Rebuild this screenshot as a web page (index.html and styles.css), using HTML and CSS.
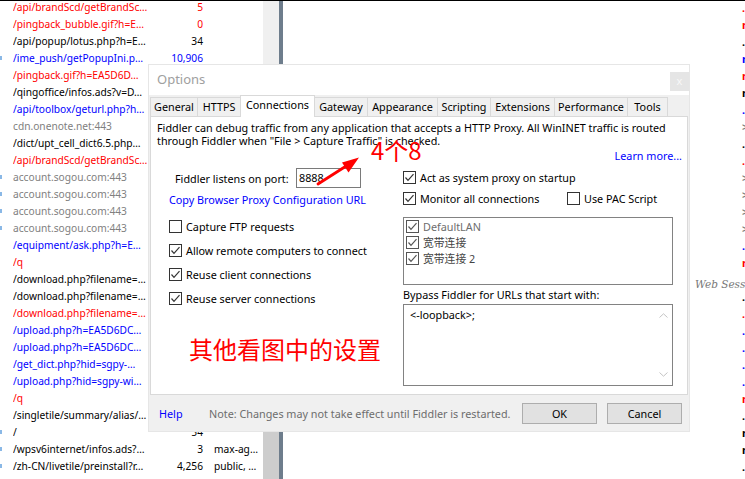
FILE: index.html
```html
<!DOCTYPE html>
<html>
<head>
<meta charset="utf-8">
<title>Options</title>
<link rel="stylesheet" href="styles.css">
</head>
<body>
<div class="screen">
  <div class="topline"></div>
  <div class="main">
    <div class="sessions">
      <div class="rows">
        <div class="row red"><span class="ic"></span><span class="url">/api/brandScd/getBrandSc…</span><span class="num">5</span><span class="cc"></span></div>
        <div class="row red"><span class="ic"></span><span class="url">/pingback_bubble.gif?h=E…</span><span class="num">0</span><span class="cc"></span></div>
        <div class="row blk"><span class="ic"></span><span class="url">/api/popup/lotus.php?h=E…</span><span class="num">34</span><span class="cc"></span></div>
        <div class="row blue"><span class="ic dot"></span><span class="url">/ime_push/getPopupIni.p…</span><span class="num">10,906</span><span class="cc"></span></div>
        <div class="row red"><span class="ic"></span><span class="url">/pingback.gif?h=EA5D6D…</span></div>
        <div class="row blk"><span class="ic"></span><span class="url">/qingoffice/infos.ads?v=D…</span></div>
        <div class="row blue"><span class="ic"></span><span class="url">/api/toolbox/geturl.php?h…</span></div>
        <div class="row gray"><span class="ic"></span><span class="url">cdn.onenote.net:443</span></div>
        <div class="row blk"><span class="ic"></span><span class="url">/dict/upt_cell_dict6.5.php…</span></div>
        <div class="row red"><span class="ic"></span><span class="url">/api/brandScd/getBrandSc…</span></div>
        <div class="row gray"><span class="ic dot"></span><span class="url">account.sogou.com:443</span></div>
        <div class="row gray"><span class="ic dot"></span><span class="url">account.sogou.com:443</span></div>
        <div class="row gray"><span class="ic dot"></span><span class="url">account.sogou.com:443</span></div>
        <div class="row gray"><span class="ic dot"></span><span class="url">account.sogou.com:443</span></div>
        <div class="row blue"><span class="ic"></span><span class="url">/equipment/ask.php?h=E…</span></div>
        <div class="row red"><span class="ic"></span><span class="url">/q</span></div>
        <div class="row blk"><span class="ic"></span><span class="url">/download.php?filename=…</span></div>
        <div class="row blk"><span class="ic"></span><span class="url">/download.php?filename=…</span></div>
        <div class="row red"><span class="ic"></span><span class="url">/download.php?filename=…</span></div>
        <div class="row blue"><span class="ic"></span><span class="url">/upload.php?h=EA5D6DC…</span></div>
        <div class="row blue"><span class="ic"></span><span class="url">/upload.php?h=EA5D6DC…</span></div>
        <div class="row blue"><span class="ic"></span><span class="url">/get_dict.php?hid=sgpy-…</span></div>
        <div class="row blue"><span class="ic"></span><span class="url">/upload.php?hid=sgpy-wi…</span></div>
        <div class="row red"><span class="ic"></span><span class="url">/q</span></div>
        <div class="row blk"><span class="ic"></span><span class="url">/singletile/summary/alias/…</span></div>
        <div class="row blk"><span class="ic dot"></span><span class="url">/</span><span class="num">54</span><span class="cc"></span></div>
        <div class="row blk"><span class="ic dot"></span><span class="url">/wpsv6internet/infos.ads?…</span><span class="num">3</span><span class="cc">max-ag…</span></div>
        <div class="row blk"><span class="ic dot"></span><span class="url">/zh-CN/livetile/preinstall?r…</span><span class="num">4,256</span><span class="cc">public, …</span></div>
        <div class="row blk"><span class="ic dot"></span><span class="url">/zh-CN/livetile/preinstall?r…</span><span class="num">4,256</span><span class="cc">public, …</span></div>
      </div>
    </div>
    <div class="vscroll"><div class="thumb"></div></div>
    <div class="splitter"></div>
    <div class="rpane">
      <div class="rows">
        <div class="mrow red">.</div>
        <div class="mrow red">n</div>
        <div class="mrow blk">.</div>
        <div class="mrow blue">n</div>
        <div class="mrow red">n</div>
        <div class="mrow blk">n</div>
        <div class="mrow blue">.</div>
        <div class="mrow gray">&gt;</div>
        <div class="mrow blk">.</div>
        <div class="mrow red">.</div>
        <div class="mrow gray">&gt;</div>
        <div class="mrow gray">&gt;</div>
        <div class="mrow gray">&gt;</div>
        <div class="mrow gray">&gt;</div>
        <div class="mrow blue">.</div>
        <div class="mrow red">n</div>
        <div class="mrow ws"><span class="wstext">Web Sessions</span></div>
        <div class="mrow blk">.</div>
        <div class="mrow red">.</div>
        <div class="mrow blue">.</div>
        <div class="mrow blue">.</div>
        <div class="mrow blue">.</div>
        <div class="mrow blue">.</div>
        <div class="mrow red">n</div>
        <div class="mrow blk">.</div>
        <div class="mrow blk">n</div>
        <div class="mrow blk">n</div>
        <div class="mrow blk">.</div>
      </div>
    </div>
  </div>

  <div class="dialog">
    <div class="titlebar">
      <span class="title">Options</span>
      <span class="close">x</span>
    </div>
    <div class="dbody">
      <div class="tabs">
        <div class="tab t-general">General</div>
        <div class="tab t-https">HTTPS</div>
        <div class="tab t-conn sel">Connections</div>
        <div class="tab t-gate">Gateway</div>
        <div class="tab t-app">Appearance</div>
        <div class="tab t-scr">Scripting</div>
        <div class="tab t-ext">Extensions</div>
        <div class="tab t-perf">Performance</div>
        <div class="tab t-tools">Tools</div>
      </div>
      <div class="panel">
        <div class="desc">Fiddler can debug traffic from any application that accepts a HTTP Proxy. All WinINET traffic is routed<br>through Fiddler when "File &gt; Capture Traffic" is checked.</div>
        <div class="learn"><span class="lnk">Learn more...</span></div>
        <div class="cols">
          <div class="lcol">
            <div class="portrow">
              <span class="plabel">Fiddler listens on port:</span>
              <span class="port">8888</span>
            </div>
            <div class="link">Copy Browser Proxy Configuration URL</div>
            <div class="checks">
              <div class="cb"><svg class="box" viewBox="0 0 13 13" width="13" height="13"><rect x="0.5" y="0.5" width="12" height="12" fill="#fff" stroke="#333"/></svg><span>Capture FTP requests</span></div>
              <div class="cb"><svg class="box" viewBox="0 0 13 13" width="13" height="13"><rect x="0.5" y="0.5" width="12" height="12" fill="#fff" stroke="#333"/><polyline points="2.5,6.5 5,9.3 10.5,3.2" fill="none" stroke="#333" stroke-width="1.2"/></svg><span>Allow remote computers to connect</span></div>
              <div class="cb"><svg class="box" viewBox="0 0 13 13" width="13" height="13"><rect x="0.5" y="0.5" width="12" height="12" fill="#fff" stroke="#333"/><polyline points="2.5,6.5 5,9.3 10.5,3.2" fill="none" stroke="#333" stroke-width="1.2"/></svg><span>Reuse client connections</span></div>
              <div class="cb"><svg class="box" viewBox="0 0 13 13" width="13" height="13"><rect x="0.5" y="0.5" width="12" height="12" fill="#fff" stroke="#333"/><polyline points="2.5,6.5 5,9.3 10.5,3.2" fill="none" stroke="#333" stroke-width="1.2"/></svg><span>Reuse server connections</span></div>
            </div>
            <div class="bigred">其他看图中的设置</div>
          </div>
          <div class="rcol">
            <div class="rrow first">
              <span class="cbi"><svg class="box" viewBox="0 0 13 13" width="13" height="13"><rect x="0.5" y="0.5" width="12" height="12" fill="#fff" stroke="#333"/><polyline points="2.5,6.5 5,9.3 10.5,3.2" fill="none" stroke="#333" stroke-width="1.2"/></svg><span>Act as system proxy on startup</span></span>
            </div>
            <div class="rrow second">
              <span class="cbi wide"><svg class="box" viewBox="0 0 13 13" width="13" height="13"><rect x="0.5" y="0.5" width="12" height="12" fill="#fff" stroke="#333"/><polyline points="2.5,6.5 5,9.3 10.5,3.2" fill="none" stroke="#333" stroke-width="1.2"/></svg><span>Monitor all connections</span></span>
              <span class="cbi"><svg class="box" viewBox="0 0 13 13" width="13" height="13"><rect x="0.5" y="0.5" width="12" height="12" fill="#fff" stroke="#333"/></svg><span>Use PAC Script</span></span>
            </div>
            <div class="listbox">
              <div class="li"><svg class="box" viewBox="0 0 13 13" width="13" height="13"><rect x="0.5" y="0.5" width="12" height="12" fill="#fff" stroke="#555"/><polyline points="2.5,6.5 5,9.3 10.5,3.2" fill="none" stroke="#555" stroke-width="1.2"/></svg><span class="li-gray">DefaultLAN</span></div>
              <div class="li"><svg class="box" viewBox="0 0 13 13" width="13" height="13"><rect x="0.5" y="0.5" width="12" height="12" fill="#fff" stroke="#555"/><polyline points="2.5,6.5 5,9.3 10.5,3.2" fill="none" stroke="#555" stroke-width="1.2"/></svg><span class="li-cjk">宽带连接</span></div>
              <div class="li"><svg class="box" viewBox="0 0 13 13" width="13" height="13"><rect x="0.5" y="0.5" width="12" height="12" fill="#fff" stroke="#555"/><polyline points="2.5,6.5 5,9.3 10.5,3.2" fill="none" stroke="#555" stroke-width="1.2"/></svg><span class="li-cjk">宽带连接 2</span></div>
            </div>
            <div class="bypass">Bypass Fiddler for URLs that start with:</div>
            <div class="ta">
              <div class="ta-text">&lt;-loopback&gt;;</div>
              <div class="ta-sb">
                <svg viewBox="0 0 9 5" width="9" height="5"><polyline points="0.5,4.5 4.5,0.8 8.5,4.5" fill="none" stroke="#c4c4c4" stroke-width="1"/></svg>
                <svg viewBox="0 0 9 5" width="9" height="5"><polyline points="0.5,0.5 4.5,4.2 8.5,0.5" fill="none" stroke="#c4c4c4" stroke-width="1"/></svg>
              </div>
            </div>
          </div>
        </div>
      </div>
      <div class="footer">
        <span class="help">Help</span>
        <span class="fnote">Note: Changes may not take effect until Fiddler is restarted.</span>
        <div class="btns">
          <div class="btn">OK</div>
          <div class="btn">Cancel</div>
        </div>
      </div>
    </div>
  </div>

  <div class="anno-num">4个8</div>
  <svg class="anno-arrow" viewBox="0 0 60 40" width="60" height="40">
    <line x1="8" y1="34" x2="37" y2="15.5" stroke="#ff0000" stroke-width="2.8" stroke-linecap="round"/>
    <polygon points="49,7.5 32,12.5 38.5,22.5" fill="#ff0000"/>
  </svg>
</div>
</body>
</html>
```

FILE: styles.css
```css
* { box-sizing: border-box; }
html, body { margin: 0; padding: 0; }
body {
  width: 745px;
  height: 479px;
  overflow: hidden;
  background: #fff;
  font-family: "Noto Sans", "Noto Sans CJK SC", sans-serif;
  font-size: 10.8px;
  color: #000;
}
.screen { position: relative; width: 745px; height: 479px; overflow: hidden; }
.topline { height: 1px; background: #000; }
.main { display: flex; height: 478px; }

.sessions { width: 263px; flex: none; overflow: hidden; font-size: 10.2px; }
.row { display: flex; align-items: flex-start; height: 17px; line-height: 12px; white-space: nowrap; }
.ic { width: 13px; height: 12px; flex: none; display: flex; align-items: center; }
.ic.dot::before { content: ""; width: 2px; height: 4px; background: #8ab8e6; }
.url { width: 142px; flex: none; overflow: hidden; padding-bottom: 4px; }
.num { width: 48px; flex: none; text-align: right; }
.cc { width: 49px; flex: none; margin-left: 11px; overflow: hidden; padding-bottom: 4px; color: #000; }
.red { color: #ff0000; }
.blue { color: #0000ff; }
.gray { color: #808080; }
.blk { color: #000; }

.vscroll { width: 16px; flex: none; background: #f0f0f0; display: flex; flex-direction: column; }
.thumb { margin-top: auto; height: 80px; background: #cdcdcd; }
.splitter { width: 4px; flex: none; background: #6e7d8c; }
.rpane { flex: 1; overflow: hidden; }
.mrow { height: 17px; line-height: 14px; padding-left: 459px; white-space: nowrap; overflow: hidden; font-weight: bold; }
.mrow.ws { padding-left: 412px; overflow: visible; font-weight: normal; }
.wstext { display: block; padding-top: 4px; line-height: 14px; font-family: "DejaVu Serif", serif; font-style: italic; font-size: 10.5px; color: #777; }

/* dialog */
.dialog {
  position: absolute;
  left: 148px;
  top: 64px;
  width: 542px;
  height: 368px;
  border: 1px solid #e6e6e6;
  background: #fff;
  display: flex;
  flex-direction: column;
}
.titlebar { height: 30px; flex: none; display: flex; justify-content: space-between; align-items: flex-start; padding-left: 8px; }
.title { margin-top: 6px; font-size: 13px; line-height: 16px; color: #a0a0a0; }
.close { margin-top: 7px; width: 19px; height: 19px; background: #e5e5e5; color: #f8f8f8; font-size: 11px; line-height: 17px; text-align: center; }
.dbody { flex: 1; background: #f0f0f0; padding: 0 1px; display: flex; flex-direction: column; }

.tabs { height: 21px; flex: none; display: flex; align-items: flex-end; }
.tab {
  height: 19px;
  margin-left: -1px;
  border: 1px solid #d9d9d9;
  border-bottom: 0;
  background: #f0f0f0;
  text-align: center;
  line-height: 17px;
  white-space: nowrap;
}
.tab.sel { height: 22px; margin-bottom: -1px; background: #fff; line-height: 18px; position: relative; z-index: 1; }
.t-general { width: 48px; margin-left: 0; }
.t-https { width: 44px; }
.t-conn { width: 75px; }
.t-gate { width: 54px; }
.t-app { width: 71px; }
.t-scr { width: 54px; }
.t-ext { width: 65px; }
.t-perf { width: 74px; }
.t-tools { width: 41px; }

.panel { height: 279px; flex: none; background: #fff; border: 1px solid #d9d9d9; }
.desc { padding: 4px 6px 0; line-height: 13px; white-space: nowrap; }
.learn { margin-top: 2px; padding-right: 5px; line-height: 14px; text-align: right; }
.lnk, .link, .help { color: #0000ff; }
.cols { display: flex; margin-top: 4px; padding-left: 18px; }
.lcol { width: 234px; flex: none; }
.rcol { width: 270px; flex: none; }

.portrow { height: 22px; display: flex; align-items: center; }
.plabel { width: 127px; padding-left: 6px; }
.port { width: 65px; height: 20px; border: 1px solid #7a7a7a; background: #fff; padding-left: 2px; line-height: 18px; }
.link { margin-top: 3px; line-height: 16px; }
.checks { margin-top: 6px; }
.cb { height: 24px; display: flex; align-items: center; gap: 4px; }
.box { flex: none; display: block; }
.bigred { margin-top: 24px; padding-left: 20px; font-family: "Noto Sans CJK SC", sans-serif; font-size: 24px; line-height: 30px; color: #ff0000; }

.rrow { height: 16px; display: flex; align-items: center; }
.rrow.first { margin-top: 2px; }
.rrow.second { margin-top: 5px; }
.cbi { display: flex; align-items: center; gap: 4px; }
.cbi.wide { width: 164px; }
.listbox { margin-top: 11px; height: 68px; border: 1px solid #828282; background: #fff; padding-left: 2px; }
.li { height: 16px; display: flex; align-items: center; gap: 4px; }
.li-gray { color: #6d6d6d; }
.li-cjk { color: #444; font-family: "Noto Sans", "Noto Sans CJK SC", sans-serif; }
.bypass { margin-top: 2px; line-height: 16px; }
.ta { margin-top: 1px; height: 82px; border: 1px solid #828282; background: #fff; display: flex; }
.ta-text { flex: 1; padding: 2px 6px; line-height: 16px; }
.ta-sb { width: 18px; flex: none; display: flex; flex-direction: column; justify-content: space-between; align-items: center; padding: 8px 0; }

.footer { flex: 1; display: flex; align-items: center; }
.help { width: 59px; padding-left: 9px; }
.fnote { color: #6d6d6d; white-space: nowrap; }
.btns { margin-left: auto; padding-right: 6px; display: flex; gap: 10px; }
.btn { width: 75px; height: 21px; border: 1px solid #adadad; background: #e1e1e1; text-align: center; line-height: 19px; }

/* annotations drawn over the screenshot */
.anno-num { position: absolute; left: 371px; top: 137px; font-family: "Noto Sans CJK SC", sans-serif; font-size: 24px; line-height: 26px; color: #ff0000; z-index: 5; }
.anno-arrow { position: absolute; left: 310px; top: 150px; z-index: 5; }
```
